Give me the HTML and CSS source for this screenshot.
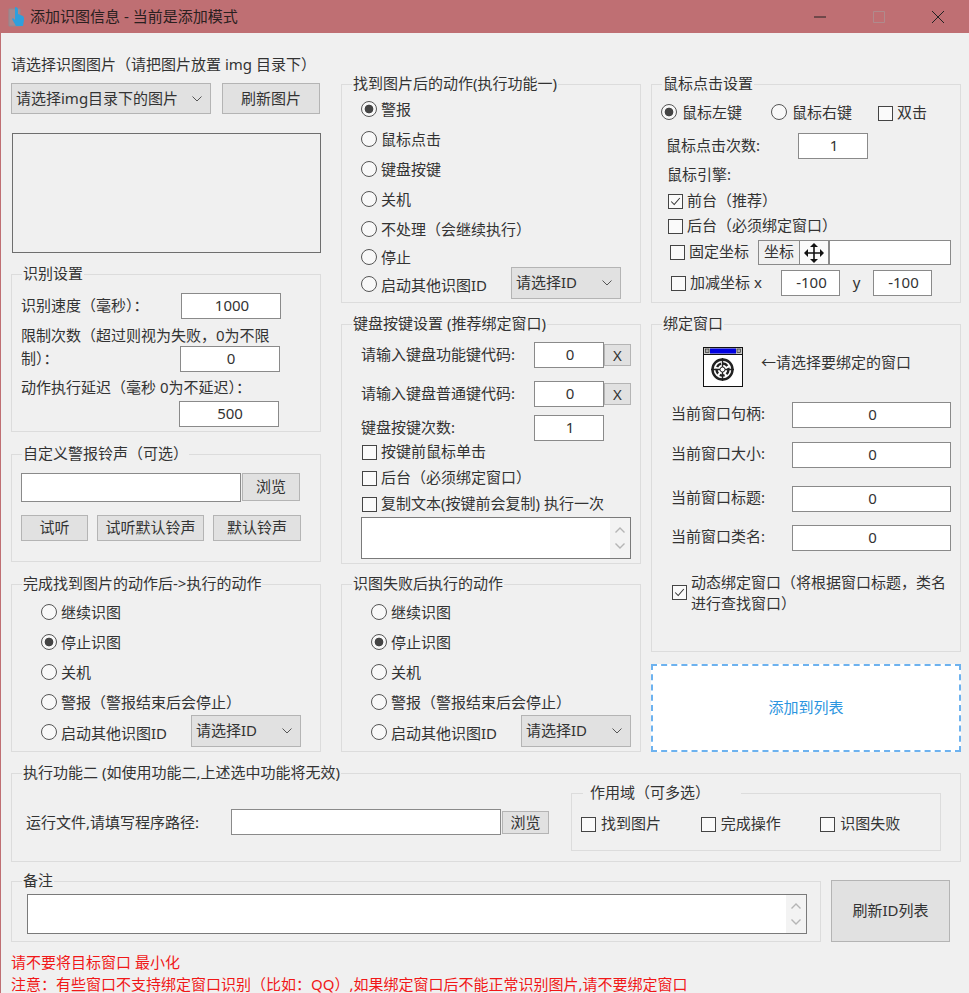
FILE: index.html
```html
<!DOCTYPE html>
<html lang="zh">
<head>
<meta charset="utf-8">
<title>添加识图信息</title>
<link rel="stylesheet" href="styles.css">
</head>
<body>
<div class="window">
  <header class="titlebar">
    <svg class="app-icon" viewBox="0 0 18 22" width="18" height="22"><path d="M1 3h11v17H1z" fill="#a9888c" stroke="#8f8a92"/><path d="M7 1c2 0 3 1 3 3v4l5 2c1 1 1 2 1 4l-1 6H8l-4-7 1-1 2 2V4c0-2 0-3 0-3z" fill="#2f9fdc"/></svg>
    <span class="title-text">添加识图信息 - 当前是添加模式</span>
    <div class="caption">
      <svg class="cap-btn" viewBox="0 0 12 12" width="12" height="12"><path d="M0 6h12" stroke="#222" fill="none"/></svg>
      <svg class="cap-btn" viewBox="0 0 12 12" width="12" height="12"><path d="M.5.5h11v11H.5z" stroke="#b08a8c" fill="none"/></svg>
      <svg class="cap-btn" viewBox="0 0 12 12" width="12" height="12"><path d="M0 0l12 12M12 0L0 12" stroke="#222" fill="none"/></svg>
    </div>
  </header>

  <main class="content">
    <div class="columns">
      <section class="col col-left">
        <div class="pick-label">请选择识图图片（请把图片放置 img 目录下）</div>
        <div class="pick-row">
          <div class="select select-img"><span>请选择img目录下的图片</span><svg class="chev" viewBox="0 0 10 6" width="10" height="6"><path d="M.5.5L5 5 9.5.5" fill="none" stroke="#555"/></svg></div>
          <button class="btn btn-refresh">刷新图片</button>
        </div>
        <div class="picture"></div>

        <div class="group g-speed">
          <div class="legend">识别设置</div>
          <div class="row speed-1"><span class="lbl-160">识别速度（毫秒）：</span><div class="field f100">1000</div></div>
          <div class="line limit-1">限制次数（超过则视为失败，0为不限</div>
          <div class="row limit-2"><span class="lbl-159">制）：</span><div class="field f100">0</div></div>
          <div class="line delay-1">动作执行延迟（毫秒 0为不延迟）：</div>
          <div class="row delay-2"><div class="field f100">500</div></div>
        </div>

        <div class="group g-sound">
          <div class="legend">自定义警报铃声（可选）</div>
          <div class="row sound-1"><div class="field f220"></div><button class="btn btn-browse">浏览</button></div>
          <div class="row sound-2"><button class="btn b67">试听</button><button class="btn b107">试听默认铃声</button><button class="btn b88">默认铃声</button></div>
        </div>

        <div class="group g-after">
          <div class="legend">完成找到图片的动作后-&gt;执行的动作</div>
          <div class="radio-list">
            <div class="opt"><span class="radio"></span>继续识图</div>
            <div class="opt"><span class="radio on"></span>停止识图</div>
            <div class="opt"><span class="radio"></span>关机</div>
            <div class="opt"><span class="radio"></span>警报（警报结束后会停止）</div>
            <div class="opt opt-select"><span class="radio"></span><span class="lbl-id">启动其他识图ID</span><div class="select select-id"><span>请选择ID</span><svg class="chev" viewBox="0 0 10 6" width="10" height="6"><path d="M.5.5L5 5 9.5.5" fill="none" stroke="#555"/></svg></div></div>
          </div>
        </div>
      </section>

      <section class="col col-mid">
        <div class="group g-action">
          <div class="legend">找到图片后的动作(执行功能一)</div>
          <div class="opt"><span class="radio on"></span>警报</div>
          <div class="opt"><span class="radio"></span>鼠标点击</div>
          <div class="opt"><span class="radio"></span>键盘按键</div>
          <div class="opt"><span class="radio"></span>关机</div>
          <div class="opt"><span class="radio"></span>不处理（会继续执行）</div>
          <div class="opt opt-stop"><span class="radio"></span>停止</div>
          <div class="opt opt-select"><span class="radio"></span><span class="lbl-id">启动其他识图ID</span><div class="select select-id"><span>请选择ID</span><svg class="chev" viewBox="0 0 10 6" width="10" height="6"><path d="M.5.5L5 5 9.5.5" fill="none" stroke="#555"/></svg></div></div>
        </div>

        <div class="group g-key">
          <div class="legend">键盘按键设置 (推荐绑定窗口)</div>
          <div class="row key-1"><span class="lbl-173">请输入键盘功能键代码:</span><div class="field f70">0</div><button class="btn btn-x">X</button></div>
          <div class="row key-2"><span class="lbl-173">请输入键盘普通键代码:</span><div class="field f70">0</div><button class="btn btn-x">X</button></div>
          <div class="row key-3"><span class="lbl-173">键盘按键次数:</span><div class="field f70">1</div></div>
          <div class="chk-row key-c1"><span class="check"></span>按键前鼠标单击</div>
          <div class="chk-row key-c2"><span class="check"></span>后台（必须绑定窗口）</div>
          <div class="chk-row key-c3"><span class="check"></span>复制文本(按键前会复制) 执行一次</div>
          <div class="textarea ta-key"><div class="scroll"><svg viewBox="0 0 10 6" width="10" height="6"><path d="M.5 5.5L5 1l4.500 4.500" fill="none" stroke="#b5b5b5" stroke-width="1.400"/></svg><svg viewBox="0 0 10 6" width="10" height="6"><path d="M.5.5L5 5 9.500.5" fill="none" stroke="#b5b5b5" stroke-width="1.400"/></svg></div></div>
        </div>

        <div class="group g-fail">
          <div class="legend">识图失败后执行的动作</div>
          <div class="radio-list">
            <div class="opt"><span class="radio"></span>继续识图</div>
            <div class="opt"><span class="radio on"></span>停止识图</div>
            <div class="opt"><span class="radio"></span>关机</div>
            <div class="opt"><span class="radio"></span>警报（警报结束后会停止）</div>
            <div class="opt opt-select"><span class="radio"></span><span class="lbl-id">启动其他识图ID</span><div class="select select-id"><span>请选择ID</span><svg class="chev" viewBox="0 0 10 6" width="10" height="6"><path d="M.5.5L5 5 9.5.5" fill="none" stroke="#555"/></svg></div></div>
          </div>
        </div>
      </section>

      <section class="col col-right">
        <div class="group g-mouse">
          <div class="legend">鼠标点击设置</div>
          <div class="row m-1">
            <span class="radio on"></span><span class="m-text-1">鼠标左键</span>
            <span class="radio"></span><span class="m-text-2">鼠标右键</span>
            <span class="check"></span><span>双击</span>
          </div>
          <div class="row m-2"><span class="lbl-132">鼠标点击次数:</span><div class="field f70">1</div></div>
          <div class="line m-3">鼠标引擎:</div>
          <div class="chk-row m-4"><span class="check checked"><svg viewBox="0 0 15 15" width="13" height="13"><path d="M2.500 7.500l3.500 3.500 6.500-7.500" fill="none" stroke="#333" stroke-width="1.200"/></svg></span>前台（推荐）</div>
          <div class="chk-row m-5"><span class="check"></span>后台（必须绑定窗口）</div>
          <div class="row m-6">
            <span class="check"></span><span class="m-fixed">固定坐标</span>
            <div class="coord-btn">坐标</div>
            <div class="move-btn"><svg viewBox="0 0 22 22" width="22" height="22"><path d="M11 2v18M2 11h18" stroke="#111" stroke-width="1.600" fill="none"/><path d="M11 1l-4 4h8zM11 21l-4-4h8zM1 11l4-4v8zM21 11l-4-4v8z" fill="#111"/></svg></div>
            <div class="field f122"></div>
          </div>
          <div class="row m-7">
            <span class="check"></span><span class="m-add">加减坐标 x</span>
            <div class="field f59">-100</div><span class="m-y">y</span><div class="field f59">-100</div>
          </div>
        </div>

        <div class="group g-bind">
          <div class="legend">绑定窗口</div>
          <div class="row b-head">
            <svg class="finder" viewBox="0 0 40 40" width="40" height="40">
              <rect x=".5" y=".5" width="39" height="39" fill="#fff" stroke="#111"/>
              <rect x="1" y="1" width="38" height="6" fill="#c8c8c8"/>
              <rect x="7" y="1.500" width="26" height="5" fill="#0000e0"/>
              <rect x="2.500" y="2" width="3.500" height="3.500" fill="#aaa" stroke="#222" stroke-width=".6"/>
              <rect x="34" y="2" width="3.500" height="3.500" fill="#aaa" stroke="#222" stroke-width=".6"/>
              <path d="M0 7.500h40" stroke="#111"/>
              <circle cx="19.500" cy="22.500" r="10" fill="none" stroke="#222" stroke-width="2.400"/>
              <circle cx="19.500" cy="22.500" r="6" fill="none" stroke="#222" stroke-width="2.400" stroke-dasharray="5 2"/>
              <path d="M19.500 11v23M8 22.500h23" stroke="#222" stroke-width="1.400"/>
              <circle cx="19.500" cy="22.500" r="2.500" fill="#fff" stroke="#222"/>
            </svg>
            <span class="b-head-text">←请选择要绑定的窗口</span>
          </div>
          <div class="row b-1"><span class="lbl-121">当前窗口句柄:</span><div class="field f159">0</div></div>
          <div class="row b-2"><span class="lbl-121">当前窗口大小:</span><div class="field f159">0</div></div>
          <div class="row b-3"><span class="lbl-121">当前窗口标题:</span><div class="field f159">0</div></div>
          <div class="row b-4"><span class="lbl-121">当前窗口类名:</span><div class="field f159">0</div></div>
          <div class="row b-dyn">
            <span class="check checked"><svg viewBox="0 0 15 15" width="13" height="13"><path d="M2.500 7.500l3.500 3.500 6.500-7.500" fill="none" stroke="#333" stroke-width="1.200"/></svg></span>
            <span class="b-dyn-text">动态绑定窗口（将根据窗口标题，类名进行查找窗口）</span>
          </div>
        </div>

        <div class="add-box">添加到列表</div>
      </section>
    </div>

    <div class="group g-func">
      <div class="legend">执行功能二 (如使用功能二,上述选中功能将无效)</div>
      <div class="func-body">
        <div class="row func-run">
          <span class="lbl-205">运行文件,请填写程序路径:</span>
          <div class="field f270"></div>
          <button class="btn btn-browse-2">浏览</button>
        </div>
        <div class="group g-scope">
          <div class="legend legend-scope">作用域（可多选）</div>
          <div class="scope-row">
            <div class="chk-row scope-item"><span class="check"></span>找到图片</div>
            <div class="chk-row scope-item"><span class="check"></span>完成操作</div>
            <div class="chk-row scope-item"><span class="check"></span>识图失败</div>
          </div>
        </div>
      </div>
    </div>

    <div class="notes-row">
      <div class="group g-note">
        <div class="legend">备注</div>
        <div class="textarea ta-note"><div class="scroll"><svg viewBox="0 0 10 6" width="10" height="6"><path d="M.5 5.500L5 1l4.500 4.500" fill="none" stroke="#b5b5b5" stroke-width="1.400"/></svg><svg viewBox="0 0 10 6" width="10" height="6"><path d="M.5.5L5 5 9.500.5" fill="none" stroke="#b5b5b5" stroke-width="1.400"/></svg></div></div>
      </div>
      <button class="btn btn-id">刷新ID列表</button>
    </div>

    <div class="warn warn-1">请不要将目标窗口 最小化</div>
    <div class="warn warn-2">注意：有些窗口不支持绑定窗口识别（比如：QQ）,如果绑定窗口后不能正常识别图片,请不要绑定窗口</div>
  </main>
</div>
</body>
</html>
```

FILE: styles.css
```css
* { box-sizing: border-box; }
html, body { margin: 0; padding: 0; }
body {
  width: 969px;
  height: 993px;
  overflow: hidden;
  background: #f0f0f0;
  font-family: "Noto Sans", "Noto Sans CJK SC", sans-serif;
  font-size: 15px;
  line-height: 20px;
  color: #333;
}
.window { width: 969px; height: 993px; border-left: 1px solid #bf6f73; overflow: hidden; }
.titlebar {
  margin-left: -1px;
  height: 33px;
  background: #bf6f73;
  display: flex;
  align-items: center;
  padding-left: 8px;
  color: #2a2020;
}
.app-icon { margin-right: 4px; }
.title-text { flex: 1; margin-bottom: 2px; }
.caption { display: flex; gap: 47px; padding-right: 25px; }
.content { padding-left: 10px; }
.columns { display: flex; height: 719px; }
.col { display: flex; flex-direction: column; }
.col-left { width: 310px; }
.col-mid { width: 300px; margin-left: 20px; padding-top: 51px; }
.col-right { width: 310px; margin-left: 10px; padding-top: 51px; }

/* generic controls */
.group { --pad: 0px; border: 1px solid #dcdcdc; padding-left: var(--pad); }
.legend {
  width: fit-content;
  height: 22px;
  margin: -12px 0 0 calc(10px - var(--pad));
  padding: 0 1px;
  background: linear-gradient(#f0f0f0 0 20px, transparent 20px);
  white-space: nowrap;
}
.row { display: flex; align-items: center; white-space: nowrap; }
.row > span { margin-bottom: 3px; }
.row > .radio { margin-bottom: 2px; }
.row > .check { margin-bottom: 0; }
.line { height: 20px; white-space: nowrap; }
.field {
  height: 26px;
  flex: none;
  background: #fff;
  border: 1px solid #8a8a8a;
  text-align: center;
  line-height: 23px;
  padding-left: 2px;
}
.btn {
  flex: none;
  display: block;
  margin: 0;
  padding: 0 0 2px;
  font: inherit;
  color: inherit;
  background: #e1e1e1;
  border: 1px solid #b4b4b4;
}
.select {
  flex: none;
  display: flex;
  align-items: center;
  justify-content: space-between;
  background: #e1e1e1;
  border: 1px solid #b4b4b4;
  padding: 0 8px 0 4px;
}
.select span { margin-bottom: 2px; }
.chev { flex: none; }
.radio {
  flex: none;
  width: 16px;
  height: 16px;
  border: 1px solid #555;
  border-radius: 50%;
  background: #f8f8f8;
}
.radio.on { background: radial-gradient(circle at center, #444 0 4px, #f8f8f8 4.700px); }
.check {
  flex: none;
  width: 15px;
  height: 15px;
  border: 1px solid #444;
  background: #fafafa;
  display: flex;
  align-items: center;
  justify-content: center;
}
.opt { display: flex; align-items: center; height: 20px; padding-bottom: 2px; white-space: nowrap; }
.opt .radio { margin-right: 4px; }
.chk-row { display: flex; align-items: center; height: 20px; padding-bottom: 2px; white-space: nowrap; }
.chk-row .check { margin: 2px 4px 0 0; }
.textarea { background: #fff; border: 1px solid #7a7a7a; display: flex; justify-content: flex-end; }
.scroll {
  width: 20px;
  background: #f3f3f3;
  display: flex;
  flex-direction: column;
  align-items: center;
  justify-content: center;
  gap: 10px;
}
.lbl-id { width: 130px; padding-top: 3px; }
.select-id { width: 110px; height: 32px; }
.opt-select { height: 32px; padding-bottom: 0; }
.opt-select .radio { margin-top: 2px; }
.radio-list .opt + .opt { margin-top: 10px; }
.radio-list .opt-select { margin-top: 2px !important; }

/* field widths */
.f59 { width: 59px; }
.f70 { width: 70px; }
.f100 { width: 100px; }
.f122 { width: 122px; }
.f159 { width: 159px; }
.f220 { width: 220px; }
.f270 { width: 270px; }

/* left column */
.pick-label { margin-top: 21px; height: 20px; white-space: nowrap; }
.pick-row { display: flex; margin-top: 9px; height: 31px; }
.select-img { width: 200px; height: 31px; }
.btn-refresh { width: 98px; height: 31px; margin-left: 11px; }
.picture { width: 309px; height: 120px; margin: 19px 0 0 1px; border: 1px solid #6e6e6e; }
.g-speed { --pad: 9px; height: 158px; margin-top: 21px; }
.lbl-160 { width: 160px; }
.lbl-159 { width: 159px; }
.speed-1 { margin-top: 8px; }
.limit-1 { margin: 6px 0 1px; }
.delay-1 { margin-top: 5px; }
.delay-2 { margin-top: 4px; padding-left: 158px; }
.g-sound { --pad: 9px; height: 108px; margin-top: 22px; }
.sound-1 { margin-top: 8px; align-items: flex-start; }
.f220 { height: 29px; }
.btn-browse { width: 58px; height: 28px; margin-left: 1px; }
.sound-2 { margin-top: 13px; gap: 9px; }
.b67 { width: 67px; height: 26px; }
.b107 { width: 107px; height: 26px; }
.b88 { width: 88px; height: 26px; }
.g-after { --pad: 29px; height: 168px; margin-top: 22px; }
.radio-list { padding-top: 8px; }

/* middle column */
.g-action { --pad: 19px; height: 219px; }
.g-action .legend + .opt { margin-top: 5px; }
.g-action .opt + .opt { margin-top: 10px; }
.g-action .opt-stop { margin-top: 8px !important; }
.g-action .opt-select { margin-top: -1px !important; }
.g-key { --pad: 19px; height: 240px; margin-top: 21px; }
.lbl-173 { width: 173px; }
.key-1 { margin-top: 7px; }
.key-2 { margin-top: 13px; }
.key-3 { margin-top: 8px; }
.btn-x { width: 27px; height: 22px; }
.key-c1 { margin-top: 1px; }
.key-c1, .key-c2, .key-c3 { margin-left: 1px; }
.key-c2 { margin-top: 6px; }
.key-c3 { margin-top: 6px; }
.ta-key { width: 270px; height: 42px; margin-top: 3px; }
.g-fail { --pad: 29px; height: 168px; margin-top: 20px; }

/* right column */
.g-mouse { --pad: 9px; height: 219px; }
.m-1 { margin-top: 5px; height: 26px; }
.m-text-1 { margin-left: 5px; width: 89px; }
.m-text-2 { margin-left: 5px; width: 86px; }
.m-1 .check { margin-right: 4px; }
.m-2 { margin-top: 7px; padding-left: 5px; }
.lbl-132 { width: 132px; }
.m-3 { margin-top: 5px; padding-left: 6px; }
.m-4 { margin-top: 7px; padding-left: 7px; }
.m-5 { margin-top: 5px; padding-left: 7px; }
.m-6 { margin-top: 4px; padding-left: 9px; height: 25px; }
.m-6 .check { margin-right: 4px; }
.m-fixed { width: 69px; }
.coord-btn { width: 42px; height: 25px; border: 1px solid #8a8a8a; background: #f0f0f0; text-align: center; line-height: 21px; }
.move-btn { width: 29px; height: 25px; border: 1px solid #8a8a8a; border-left: 0; background: #fafafa; display: flex; align-items: center; justify-content: center; }
.m-6 .f122 { height: 25px; }
.m-7 { margin-top: 5px; padding-left: 10px; height: 26px; }
.m-7 .check { margin-right: 4px; }
.m-add { width: 91px; }
.m-y { width: 33px; text-align: center; }
.g-bind { --pad: 19px; height: 329px; margin-top: 21px; }
.b-head { margin-top: 12px; padding-left: 32px; height: 40px; }
.row > .b-head-text { margin-bottom: 10px; }
.finder { margin-right: 18px; }
.b-1 { margin-top: 15px; }
.b-2 { margin-top: 14px; }
.b-3 { margin-top: 18px; }
.b-4 { margin-top: 13px; }
.lbl-121 { width: 121px; }
.b-dyn { margin-top: 21px; margin-left: 1px; align-items: center; white-space: normal; }
.b-dyn .check { margin-right: 4px; }
.row > .b-dyn-text { width: 258px; line-height: 21px; margin-bottom: 0; }
.add-box {
  height: 88px;
  margin-top: 12px;
  padding-bottom: 2px;
  border: 2px dashed #6db2ef;
  background: #fff;
  color: #2b95e0;
  display: flex;
  align-items: center;
  justify-content: center;
}

/* bottom */
.g-func { --pad: 14px; width: 950px; height: 89px; margin-top: 21px; }
.func-body { display: flex; }
.func-run { margin-top: 25px; height: 26px; align-items: center; }
.lbl-205 { width: 205px; }
.row > .lbl-205 { margin-bottom: 1px; }
.btn-browse-2 { width: 47px; height: 23px; margin-left: 1px; }
.g-scope { --pad: 9px; width: 370px; height: 58px; margin: 9px 0 0 22px; }
.legend-scope { margin-left: 2px; padding: 0 31px 0 7px; }
.scope-row { display: flex; margin-top: 10px; }
.scope-item { width: 120px; }
.scope-item .check { margin-right: 5px; }
.notes-row { display: flex; margin-top: 18px; }
.g-note { --pad: 15px; width: 810px; height: 61px; margin-top: 1px; }
.ta-note { width: 780px; height: 40px; margin-top: 2px; }
.btn-id { width: 119px; height: 62px; margin-left: 10px; }
.warn { height: 18px; line-height: 18px; color: #f01818; white-space: nowrap; }
.warn-1 { margin-top: 11px; }
.warn-2 { margin-top: 4px; }
```
